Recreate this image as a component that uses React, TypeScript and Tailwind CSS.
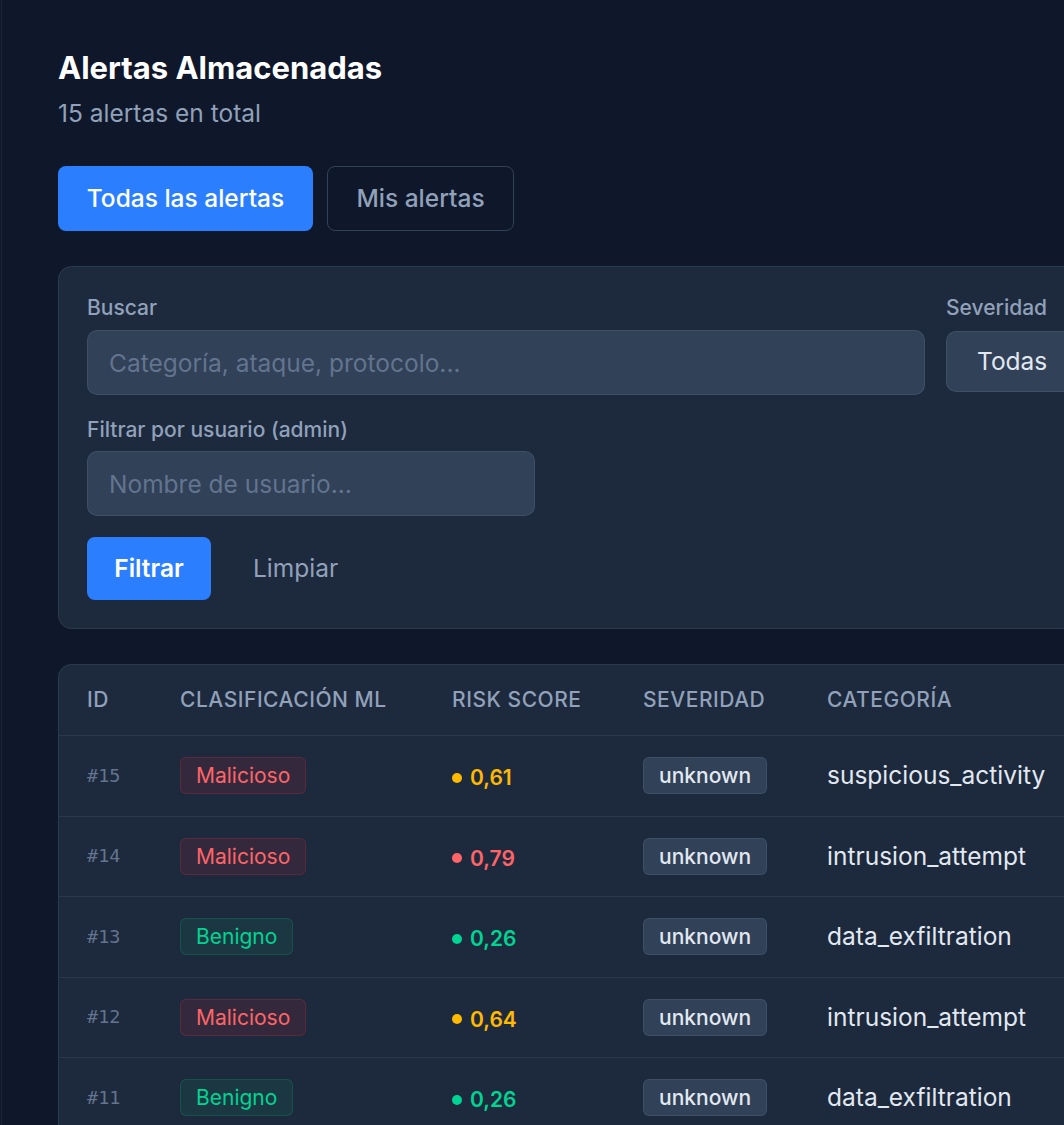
import React from "react";

type Alert = {
  id: number;
  ml: "Malicioso" | "Benigno";
  risk: number;
  severity: string;
  category: string;
};

const alerts: Alert[] = [
  { id: 15, ml: "Malicioso", risk: 0.61, severity: "unknown", category: "suspicious_activity" },
  { id: 14, ml: "Malicioso", risk: 0.79, severity: "unknown", category: "intrusion_attempt" },
  { id: 13, ml: "Benigno", risk: 0.26, severity: "unknown", category: "data_exfiltration" },
  { id: 12, ml: "Malicioso", risk: 0.64, severity: "unknown", category: "intrusion_attempt" },
  { id: 11, ml: "Benigno", risk: 0.26, severity: "unknown", category: "data_exfiltration" },
];

function riskColor(v: number) {
  if (v >= 0.7) return { text: "text-red-400", dot: "bg-red-400" };
  if (v >= 0.4) return { text: "text-amber-400", dot: "bg-amber-400" };
  return { text: "text-emerald-400", dot: "bg-emerald-400" };
}

function MlBadge({ label }: { label: Alert["ml"] }) {
  const malicious = label === "Malicioso";
  return (
    <span
      className={
        malicious
          ? "inline-flex h-[37px] items-center rounded-md border border-red-500/20 bg-red-500/10 px-[15px] text-[21px] text-red-400"
          : "inline-flex h-[37px] items-center rounded-md border border-emerald-500/20 bg-emerald-500/10 px-[15px] text-[21px] text-emerald-400"
      }
    >
      {label}
    </span>
  );
}

export default function App() {
  return (
    <div
      className="min-h-screen w-full overflow-hidden bg-slate-900 flex"
      style={{ fontFamily: "Inter, 'Noto Sans', sans-serif" }}
    >
      <div className="w-px shrink-0" />
      <div className="w-px shrink-0 bg-slate-800/80" />
      <main className="shrink-0 w-[1200px] pl-[56px] pt-[50px] pb-10">
        {/* Header */}
        <h1 className="text-[31px] leading-9 font-bold text-white">Alertas Almacenadas</h1>
        <p className="mt-[11px] text-[24.5px] leading-8 text-slate-400">15 alertas en total</p>

        {/* Tabs */}
        <div className="mt-[37px] flex gap-[14px]">
          <button className="h-[65px] w-[255px] rounded-lg bg-blue-500 text-[24.5px] font-medium text-white">
            Todas las alertas
          </button>
          <button className="h-[65px] w-[187px] rounded-lg border border-slate-700 text-[24.5px] font-medium text-slate-400">
            Mis alertas
          </button>
        </div>

        {/* Filters */}
        <section className="mt-[35px] rounded-[14px] border border-slate-700/70 bg-slate-800 px-[28px] pt-[27px] pb-[28px]">
          <div className="flex gap-[21px]">
            <div className="w-[838px]">
              <label className="block text-[21px] leading-7 font-medium text-slate-400">Buscar</label>
              <input
                className="mt-[8px] h-[65px] w-full rounded-[10px] border border-slate-600/70 bg-slate-700 px-[21px] text-[24.5px] text-slate-200 placeholder:text-slate-500 outline-none"
                placeholder="Categoría, ataque, protocolo..."
              />
            </div>
            <div className="w-[160px]">
              <label className="block text-[21px] leading-7 font-medium text-slate-400">Severidad</label>
              <div className="mt-[9px] flex h-[61px] w-full items-center rounded-[10px] border border-slate-600/70 bg-slate-700 pl-[30px] text-[24.5px] text-slate-200">
                Todas
              </div>
            </div>
          </div>

          <label className="mt-[21px] block text-[21px] leading-7 font-medium text-slate-400">
            Filtrar por usuario (admin)
          </label>
          <input
            className="mt-[7px] h-[65px] w-[448px] rounded-[10px] border border-slate-600/70 bg-slate-700 px-[21px] text-[24.5px] text-slate-200 placeholder:text-slate-500 outline-none"
            placeholder="Nombre de usuario..."
          />

          <div className="mt-[21px] flex items-center gap-[42px]">
            <button className="h-[63px] w-[124px] rounded-lg bg-blue-500 text-[24.5px] font-semibold text-white">
              Filtrar
            </button>
            <button className="text-[24.5px] text-slate-400">Limpiar</button>
          </div>
        </section>

        {/* Table */}
        <section className="mt-[35px] overflow-hidden rounded-[14px] border border-slate-700/70 bg-slate-800">
          <div className="grid h-[70px] grid-cols-[93px_272px_191px_184px_1fr] items-center px-[28px] text-[21px] font-medium uppercase tracking-wide text-slate-400">
            <span>ID</span>
            <span>Clasificación ML</span>
            <span>Risk Score</span>
            <span>Severidad</span>
            <span>Categoría</span>
          </div>
          {alerts.map((a) => {
            const c = riskColor(a.risk);
            return (
              <div
                key={a.id}
                className="grid h-[80.5px] grid-cols-[93px_272px_191px_184px_1fr] items-center border-t border-slate-700/60 px-[28px]"
              >
                <span
                  className="text-[18.5px] text-slate-500"
                  style={{ fontFamily: "'DejaVu Sans Mono', monospace" }}
                >
                  #{a.id}
                </span>
                <span>
                  <MlBadge label={a.ml} />
                </span>
                <span className={`mt-[4px] flex items-center gap-[8px] text-[21px] font-semibold ${c.text}`}>
                  <span className={`h-[10px] w-[10px] rounded-full ${c.dot}`} />
                  {a.risk.toFixed(2).replace(".", ",")}
                </span>
                <span>
                  <span className="inline-flex h-[37px] items-center rounded-md border border-slate-600/70 bg-slate-700 px-[15px] text-[21px] font-medium text-slate-200">
                    {a.severity}
                  </span>
                </span>
                <span className="text-[24.5px] text-slate-200">{a.category}</span>
              </div>
            );
          })}
        </section>
      </main>
    </div>
  );
}
